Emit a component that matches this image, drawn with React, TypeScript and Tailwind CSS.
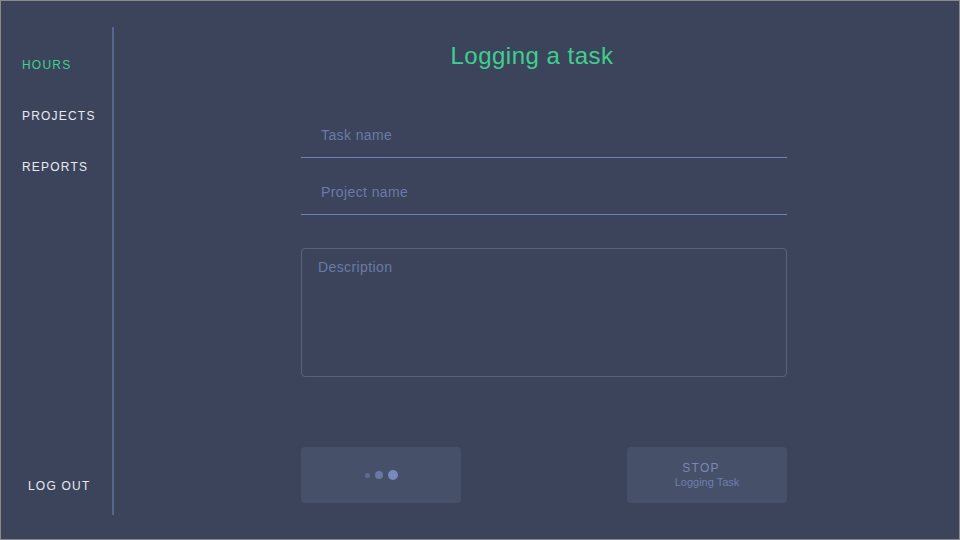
import React from 'react';

const navItems = ['HOURS', 'PROJECTS', 'REPORTS'];

const App: React.FC = () => {
  return (
    <div
      className="w-[960px] h-[540px] border border-[#8a8a8a] bg-[#3c445c] flex overflow-hidden"
      style={{ fontFamily: '"Liberation Sans", Arial, sans-serif' }}
    >
      {/* sidebar */}
      <aside className="w-[113px] mt-[26px] mb-[24px] border-r-2 border-[#55668f] flex flex-col justify-between">
        <nav className="pl-[21px] pt-[30px] flex flex-col gap-[35px]">
          {navItems.map((item, i) => (
            <a
              key={item}
              href="#"
              className={`block text-[12px] leading-4 tracking-[1.2px] ${
                i === 0 ? 'text-[#3fcf8e]' : 'text-[#e8eaf0]'
              }`}
            >
              {item}
            </a>
          ))}
        </nav>
        <a href="#" className="block pl-[27px] pb-[21px] text-[12px] leading-4 tracking-[1.2px] text-[#e8eaf0]">
          LOG OUT
        </a>
      </aside>

      {/* main */}
      <main className="flex-1">
        <h1 className="w-[836px] mt-[39px] text-center text-[24px] leading-8 tracking-[0.5px] text-[#3fcf8e]">
          Logging a task
        </h1>

        <form className="ml-[187px] w-[486px] mt-[29px] flex flex-col">
          <input
            placeholder="Task name"
            className="w-full h-[57px] bg-transparent border-b border-[#6e81b8] pl-5 pt-[12px] text-[14px] tracking-[0.4px] text-[#c8cfe6] outline-none placeholder:text-[#6b7aa8]"
          />
          <input
            placeholder="Project name"
            className="w-full h-[57px] bg-transparent border-b border-[#6e81b8] pl-5 pt-[12px] text-[14px] tracking-[0.4px] text-[#c8cfe6] outline-none placeholder:text-[#6b7aa8]"
          />
          <textarea
            placeholder="Description"
            className="mt-[33px] w-full h-[129px] resize-none bg-transparent border border-[#55617f] rounded-[4px] px-4 pt-2 text-[14px] leading-5 tracking-[0.4px] text-[#c8cfe6] outline-none placeholder:text-[#6b7aa8]"
          />

          <div className="mt-[70px] flex justify-between">
            <button
              type="button"
              className="w-[160px] h-[56px] rounded-[4px] bg-[#465069] flex items-center justify-center gap-[5px]"
            >
              <span className="w-[5px] h-[5px] rounded-full bg-[#5e6b93]" />
              <span className="w-[8px] h-[8px] rounded-full bg-[#6a78a5]" />
              <span className="w-[10px] h-[10px] rounded-full bg-[#7a89bd]" />
            </button>
            <button
              type="button"
              className="w-[160px] h-[56px] rounded-[4px] bg-[#465069] flex flex-col items-center justify-center"
            >
              <span className="pr-3 text-[12px] leading-[15px] tracking-[1.2px] text-[#7a88b8]">STOP</span>
              <span className="text-[11px] leading-[13px] text-[#6f7fb0]">Logging Task</span>
            </button>
          </div>
        </form>
      </main>
    </div>
  );
};

export default App;
